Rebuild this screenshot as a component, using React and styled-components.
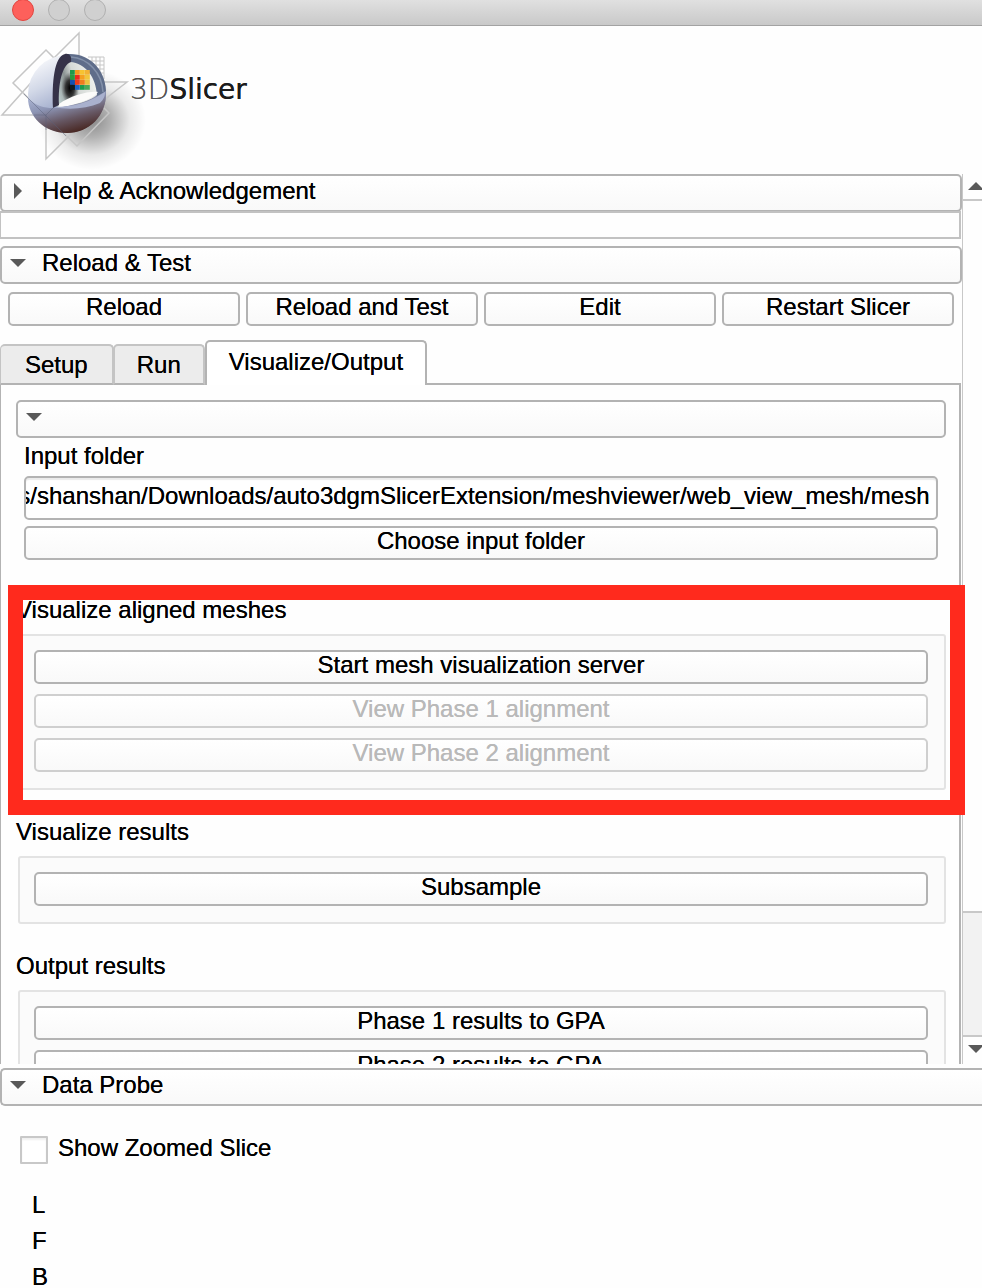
import React, { useEffect, useRef } from "react";
import styled, { createGlobalStyle, css } from "styled-components";

const GlobalStyle = createGlobalStyle`
  * { box-sizing: border-box; }
  body {
    margin: 0;
    background: #fefefe;
    color: #000;
    font-family: "Liberation Sans", Arial, Helvetica, sans-serif;
    font-size: 24px;
    line-height: 28px;
    text-shadow: 0 0 0 currentColor;
  }
  button, input { font: inherit; color: inherit; text-shadow: inherit; }
`;

const line = "#b3b3b3";

const Window = styled.div`
  display: flex;
  flex-direction: column;
  height: 100vh;
  overflow: hidden;
`;

const TitleBar = styled.header`
  display: flex;
  flex: none;
  align-items: center;
  gap: 14px;
  height: 26px;
  padding: 0 12px 5px;
  background: linear-gradient(#e0e0e0, #c9c9c9);
  border-bottom: 1px solid #a3a3a3;
`;

const WindowButton = styled.button`
  flex: none;
  width: 22px;
  height: 22px;
  padding: 0;
  border: 1px solid ${(p) => (p.$close ? "#e2453f" : "#b0b0b0")};
  border-radius: 50%;
  background: ${(p) => (p.$close ? "#fd605b" : "#d0d0d0")};
`;

const Brand = styled.div`
  display: flex;
  flex: none;
  align-items: center;
  height: 148px;
  padding-bottom: 20px;
`;

const LogoArt = styled.svg`
  flex: none;
  align-self: flex-start;
  width: 130px;
  height: 148px;
  overflow: visible;
`;

const Wordmark = styled.span`
  position: relative;
  font-family: "DejaVu Sans", Verdana, sans-serif;
  font-size: 28px;
  color: #1c1c1c;
`;

const WordmarkLight = styled.span`
  font-weight: 200;
  color: #555;
`;

const ScrollArea = styled.main`
  display: flex;
  flex: 1;
  min-height: 0;
  overflow: hidden;
`;

const Module = styled.div`
  flex: 1;
  min-width: 0;
`;

const buttonFace = css`
  border: 2px solid ${line};
  border-radius: 5px;
  background: linear-gradient(#fff, #f9f9f9);
`;

const SectionHeader = styled.button`
  ${buttonFace}
  display: flex;
  align-items: center;
  gap: 16px;
  width: 100%;
  height: 38px;
  padding: 0 8px 4px;
  text-align: left;
  ${(p) => p.$open && css`border-right: 0; border-radius: 5px 0 0 5px;`}
`;

const Arrow = styled.svg`
  flex: none;
  width: 16px;
  height: 16px;
  fill: #595959;
`;

const HelpBody = styled.div`
  height: 28px;
  margin: -1px 1px 7px 0;
  border: 2px solid #c2c2c2;
  border-left-width: 1px;
`;

const ButtonRow = styled.div`
  display: flex;
  gap: 6px;
  padding: 8px 8px 14px;
`;

const PushButton = styled.button`
  ${buttonFace}
  flex: 1;
  width: 100%;
  min-width: 0;
  min-height: 34px;
  height: 34px;
  padding: 0 0 4px;
  line-height: 26px;
  text-align: center;
  white-space: nowrap;
  &:disabled {
    color: #b9b9b9;
    border-color: #cfcfcf;
  }
`;

const TabBar = styled.div`
  display: flex;
  align-items: flex-end;
  height: 43px;
`;

const Tab = styled.button`
  position: relative;
  height: 41px;
  padding: 0 22px;
  margin: 0 0 -2px -1px;
  border: 2px solid #c4c4c4;
  border-bottom-color: ${line};
  border-radius: 5px 5px 0 0;
  background: #ececec;
  &:first-child { margin-left: 0; padding: 0 24px; border-left-width: 1px; }
  &[aria-selected="true"] {
    height: 45px;
    margin-left: 0;
    padding-bottom: 4px;
    border-color: ${line};
    border-bottom: 0;
    background: #fff;
  }
`;

const TabPanel = styled.div`
  margin-right: 1px;
  padding: 15px 13px 40px 15px;
  border: 2px solid ${line};
  border-left-width: 1px;
`;

const FolderFields = styled.div`
  display: flex;
  flex-direction: column;
  padding: 0 8px 8px;
`;

const FieldLabel = styled.label`
  padding: 4px 0 6px;
`;

const PathInput = styled.input`
  width: 100%;
  height: 44px;
  margin-bottom: 6px;
  padding: 0 7px 4px 0;
  border: 2px solid ${line};
  border-radius: 5px;
  background: #fff;
  box-shadow: inset 0 2px 1px #ebebeb;
`;

const Group = styled.section`
  position: relative;
  margin-top: 28px;
`;

const GroupTitle = styled.h2`
  margin: 0;
  padding-bottom: 10px;
  font-size: 24px;
  font-weight: 400;
`;

const GroupBox = styled.div`
  display: flex;
  flex-direction: column;
  gap: 10px;
  margin-left: 2px;
  padding: 14px 16px 16px 14px;
  border: 2px solid #e3e3e3;
  border-radius: 3px;
  background: #fbfbfb;
`;

const Highlight = styled.div`
  position: absolute;
  z-index: 2;
  inset: -11px -19px -25px -8px;
  border: 15px solid #ff2a1d;
  pointer-events: none;
`;

const ScrollBar = styled.div`
  display: flex;
  flex: none;
  flex-direction: column;
  width: 20px;
  border-left: 1px solid #c8c8c8;
  overflow: hidden;
`;

const ScrollButton = styled.button`
  flex: none;
  height: 27px;
  padding: 0 0 3px 5px;
  border: 0;
  background: #fefefe;
  text-align: left;
  line-height: 0;
`;

const ScrollTrack = styled.div`
  display: flex;
  flex: 1;
  flex-direction: column;
  justify-content: flex-end;
  border-top: 2px solid #c8c8c8;
  margin-top: -2px;
`;

const ScrollThumb = styled.div`
  height: 126px;
  border: solid #c8c8c8;
  border-width: 2px 0;
  background: #f2f2f2;
`;

const Probe = styled.footer`
  flex: none;
  padding-top: 4px;
`;

const CheckRow = styled.label`
  display: flex;
  align-items: center;
  gap: 10px;
  padding: 30px 20px;
  height: 88px;
`;

const CheckBox = styled.input`
  appearance: none;
  flex: none;
  width: 28px;
  height: 28px;
  margin: 0;
  border: 2px solid #c8c8c8;
  border-radius: 1px;
  background: #fff;
  box-shadow: inset 0 2px 2px #f0f0f0;
`;

const CheckText = styled.span`
  padding-bottom: 4px;
`;

const LayerList = styled.ul`
  display: flex;
  flex-direction: column;
  gap: 16px;
  margin: 0;
  padding: 1px 32px;
  line-height: 20px;
  list-style: none;
`;

const arrowPoints = {
  right: "4,0 12,8 4,16",
  down: "0,4 16,4 8,12",
  up: "0,12 16,12 8,4",
};

function Icon({ dir }) {
  return (
    <Arrow viewBox="0 0 16 16" aria-hidden="true">
      <polygon points={arrowPoints[dir]} />
    </Arrow>
  );
}

const cubeColors = [
  ["#1f9a4a", "#f59a1d", "#f7c331", "#f3b233"],
  ["#2a9a3f", "#ee2a1c", "#f6a11e", "#f2c53a"],
  ["#1450b4", "#ef3b1d", "#ee7d1d", "#e9c33f"],
  ["#101a24", "#1a63c9", "#1c9c4d", "#4aa95a"],
];

function Logo() {
  return (
    <LogoArt viewBox="0 26 130 148" role="img" aria-label="3DSlicer logo">
      <defs>
        <radialGradient id="shadow">
          <stop offset="0" stopColor="#000" stopOpacity="0.46" />
          <stop offset="0.35" stopColor="#000" stopOpacity="0.3" />
          <stop offset="0.7" stopColor="#000" stopOpacity="0.08" />
          <stop offset="1" stopColor="#000" stopOpacity="0" />
        </radialGradient>
        <linearGradient id="ball" x1="0.1" y1="0" x2="0.6" y2="1">
          <stop offset="0" stopColor="#ffffff" />
          <stop offset="0.35" stopColor="#d3d9e8" />
          <stop offset="0.65" stopColor="#a3aecd" />
          <stop offset="1" stopColor="#5d4a58" />
        </linearGradient>
        <linearGradient id="bowl" x1="0.1" y1="0" x2="0.6" y2="1">
          <stop offset="0" stopColor="#b4bedb" />
          <stop offset="0.4" stopColor="#8c94b4" />
          <stop offset="0.7" stopColor="#665763" />
          <stop offset="1" stopColor="#47251f" />
        </linearGradient>
        <linearGradient id="core" x1="0" y1="0.7" x2="1" y2="0.3">
          <stop offset="0" stopColor="#b9c9c8" />
          <stop offset="0.3" stopColor="#8b9493" />
          <stop offset="0.5" stopColor="#d5dad7" />
          <stop offset="1" stopColor="#f5f6f3" />
        </linearGradient>
        <radialGradient id="hollow">
          <stop offset="0" stopColor="#000" />
          <stop offset="0.5" stopColor="#222" stopOpacity="0.85" />
          <stop offset="1" stopColor="#555" stopOpacity="0" />
        </radialGradient>
      </defs>
      <ellipse cx="92" cy="120" rx="54" ry="50" fill="url(#shadow)" />
      <g fill="none" stroke="#c6c6c6" strokeWidth="1.5">
        <path d="M79 60V33L46 66L2 115H46V159L109 96L127 82H100" />
        <path d="M56 60L46 50L13 83L77 146L109 113L100 104" />
        <path d="M88 57h16v22M92 57v20M96 57v20M100 57v22M90 61h14M90 65h14M90 69h14M90 73h14" strokeWidth="1" />
      </g>
      <circle cx="67" cy="94" r="39" fill="url(#ball)" />
      <path d="M68 54C91 53 107 72 106 94L97 100C96 80 84 64 66 62Z" fill="#5f6d8a" />
      <path d="M71 57C88 58 102 73 103 92" fill="none" stroke="#8290a9" strokeWidth="1.5" />
      <path d="M57 107C57 84 61 64 70 62C86 63 96 78 97 95C84 106 70 104 57 107Z" fill="url(#core)" />
      <ellipse cx="70" cy="88" rx="9" ry="16" fill="url(#hollow)" />
      <path d="M59 104C70 96 88 91 98 92C91 101 74 105 58 108Z" fill="#fbfbfa" />
      <path d="M53 108C52 82 54 57 65 54C69 53 72 56 71 62C62 65 58 84 59 105Z" fill="#353248" />
      <g>
        {cubeColors.map((row, y) =>
          row.map((fill, x) => (
            <rect key={`${x}-${y}`} x={70 + x * 5} y={70 + y * 5} width="4.8" height="4.8" fill={fill} />
          ))
        )}
      </g>
      <path d="M28 98C36 106 44 108 53 108C74 107 90 101 106 91C107 116 89 133 67 133C44 133 28 116 28 98Z" fill="url(#bowl)" />
      <path d="M54 107C74 107 90 102 105 92C105 96 104 99 100 103C86 109 68 110 54 107Z" fill="#a9b1ce" />
      <path d="M24 94L66 136M46 115L54 107M34 115H46V130" fill="none" stroke="#596078" strokeOpacity="0.45" />
    </LogoArt>
  );
}

const meshPath = "/Users/shanshan/Downloads/auto3dgmSlicerExtension/meshviewer/web_view_mesh/mesh";

function FolderPath() {
  const ref = useRef(null);
  useEffect(() => {
    ref.current.scrollLeft = ref.current.scrollWidth;
  }, []);
  return <PathInput id="input-folder" ref={ref} defaultValue={meshPath} />;
}

function ActionGroup({ title, actions, highlighted }) {
  return (
    <Group>
      <GroupTitle>{title}</GroupTitle>
      <GroupBox>
        {actions.map(({ label, disabled }) => (
          <PushButton key={label} disabled={disabled}>{label}</PushButton>
        ))}
      </GroupBox>
      {highlighted && <Highlight />}
    </Group>
  );
}

export default function App() {
  return (
    <Window>
      <GlobalStyle />
      <TitleBar>
        <WindowButton $close aria-label="Close" />
        <WindowButton aria-label="Minimize" />
        <WindowButton aria-label="Zoom" />
      </TitleBar>
      <Brand>
        <Logo />
        <Wordmark><WordmarkLight>3D</WordmarkLight>Slicer</Wordmark>
      </Brand>
      <ScrollArea>
        <Module>
          <SectionHeader><Icon dir="right" />Help &amp; Acknowledgement</SectionHeader>
          <HelpBody />
          <SectionHeader><Icon dir="down" />Reload &amp; Test</SectionHeader>
          <ButtonRow>
            {["Reload", "Reload and Test", "Edit", "Restart Slicer"].map((label) => (
              <PushButton key={label}>{label}</PushButton>
            ))}
          </ButtonRow>
          <TabBar role="tablist">
            <Tab role="tab" aria-selected="false">Setup</Tab>
            <Tab role="tab" aria-selected="false">Run</Tab>
            <Tab role="tab" aria-selected="true">Visualize/Output</Tab>
          </TabBar>
          <TabPanel role="tabpanel">
            <SectionHeader aria-label="Input"><Icon dir="down" /></SectionHeader>
            <FolderFields>
              <FieldLabel htmlFor="input-folder">Input folder</FieldLabel>
              <FolderPath />
              <PushButton>Choose input folder</PushButton>
            </FolderFields>
            <ActionGroup
              title="Visualize aligned meshes"
              highlighted
              actions={[
                { label: "Start mesh visualization server" },
                { label: "View Phase 1 alignment", disabled: true },
                { label: "View Phase 2 alignment", disabled: true },
              ]}
            />
            <ActionGroup title="Visualize results" actions={[{ label: "Subsample" }]} />
            <ActionGroup
              title="Output results"
              actions={[{ label: "Phase 1 results to GPA" }, { label: "Phase 2 results to GPA" }]}
            />
          </TabPanel>
        </Module>
        <ScrollBar>
          <ScrollButton aria-label="Scroll up"><Icon dir="up" /></ScrollButton>
          <ScrollTrack><ScrollThumb /></ScrollTrack>
          <ScrollButton aria-label="Scroll down"><Icon dir="down" /></ScrollButton>
        </ScrollBar>
      </ScrollArea>
      <Probe>
        <SectionHeader $open><Icon dir="down" />Data Probe</SectionHeader>
        <CheckRow>
          <CheckBox type="checkbox" />
          <CheckText>Show Zoomed Slice</CheckText>
        </CheckRow>
        <LayerList>
          <li>L</li>
          <li>F</li>
          <li>B</li>
        </LayerList>
      </Probe>
    </Window>
  );
}
